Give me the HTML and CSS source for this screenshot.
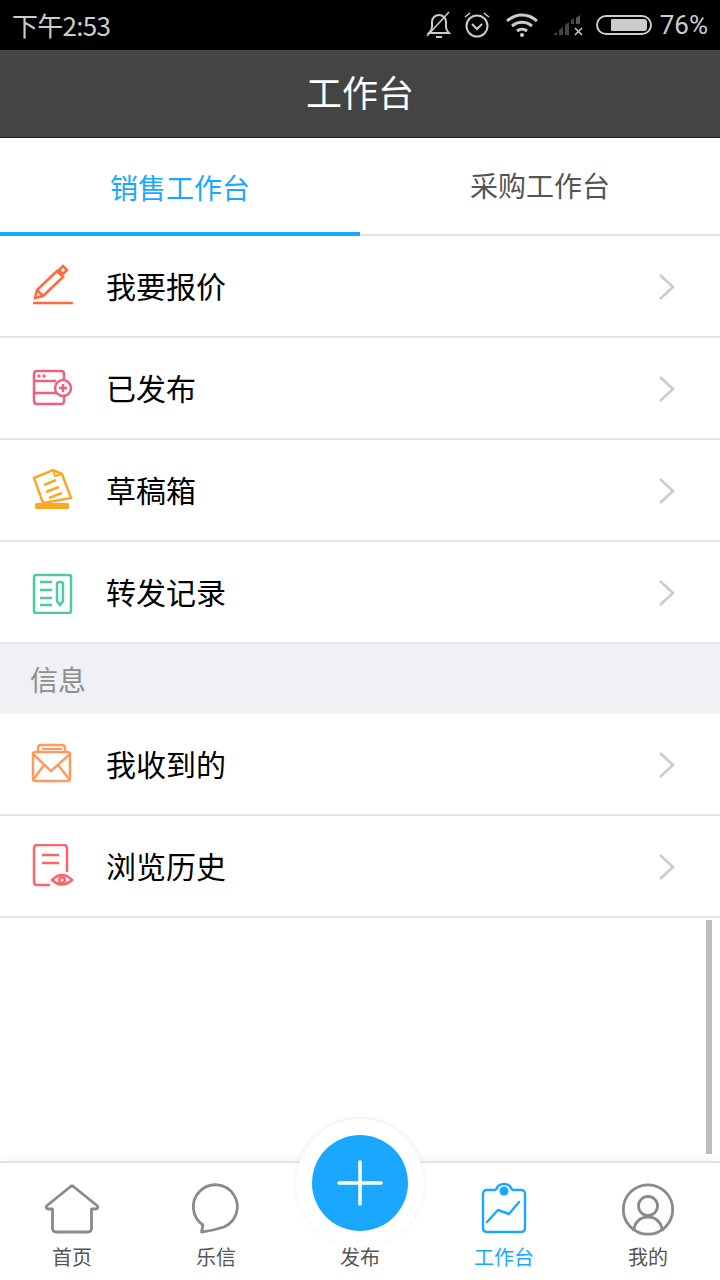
FILE: index.html
```html
<!DOCTYPE html>
<html lang="zh-CN">
<head>
	<meta charset="UTF-8">
	<title>工作台</title>
	<link rel="stylesheet" href="styles.css">
</head>
<body>
	<div class="app">
		<div class="status">
			<span class="time">下午2:53</span>
			<div class="status-right">
				<svg class="si bell" width="26" height="28" viewBox="0 0 26 28" fill="none" stroke="#ccc" stroke-width="2"><path d="M3 22c2-2 3-3 3-6v-5c0-4 3-7 7-7s7 3 7 7v5c0 3 1 4 3 6z"/><path d="M10 26h6"/><path d="M1 25L23 1" stroke-width="1.6"/></svg>
				<svg class="si clock" width="28" height="28" viewBox="0 0 28 28" fill="none" stroke="#ccc" stroke-width="2"><circle cx="14" cy="15" r="10.5"/><path d="M9 13l5 5 5-5"/><path d="M2 6l5-4M26 6l-5-4" stroke-width="1.6"/></svg>
				<svg class="si wifi" width="34" height="26" viewBox="0 0 34 26" fill="none" stroke="#ccc" stroke-width="3"><path d="M2 9c9-8 21-8 30 0"/><path d="M7 14c6-5 14-5 20 0"/><path d="M12 19c3-2.500 7-2.500 10 0"/><circle cx="17" cy="23" r="2" fill="#ccc" stroke="none"/></svg>
				<svg class="si signal" width="32" height="24" viewBox="0 0 32 24"><path d="M1 22l4-3v3zM7 22v-5l4-3v8zM13 22v-10l4-3v13z" fill="#444"/><path d="M24 11V5l4-3v9z" fill="#555"/><path d="M19 11V7l3-2v6z" fill="#444"/><path d="M23 15l7 7M30 15l-7 7" stroke="#ccc" stroke-width="1.500" fill="none"/></svg>
				<div class="battery"><div class="battery-level"></div></div>
				<span class="percent">76%</span>
			</div>
		</div>
		<div class="title">工作台</div>
		<div class="tabs">
			<div class="tab on">销售工作台</div>
			<div class="tab">采购工作台</div>
		</div>

		<div class="row">
			<svg class="ico" width="44" height="44" viewBox="0 0 44 44" fill="none" stroke="#ff6a3d" stroke-width="2.500"><path d="M5 34l2-8L27 7l6 6-20 19z"/><path d="M7 26l6 6"/><path d="M29 6l4-4 4 4-4 4z"/><path d="M3 39h40"/></svg>
			<span class="name">我要报价</span>
			<svg class="arrow" width="18" height="28" viewBox="0 0 18 28" fill="none" stroke="#ccc" stroke-width="2.600"><path d="M2 2l13 12L2 26"/></svg>
		</div>
		<div class="row">
			<svg class="ico" width="44" height="44" viewBox="0 0 44 44" fill="none" stroke="#f0607a" stroke-width="2.500"><path d="M34 13V8q0-3-3-3H7Q4 5 4 8v27q0 3 3 3h24q3 0 3-3v-5"/><path d="M4 15h22M4 27h22"/><circle cx="33" cy="22" r="8"/><path d="M29 22h8M33 18v8"/><circle cx="9" cy="10" r="1.700" fill="#f0607a" stroke="none"/><circle cx="14" cy="10" r="1.700" fill="#f0607a" stroke="none"/></svg>
			<span class="name">已发布</span>
			<svg class="arrow" width="18" height="28" viewBox="0 0 18 28" fill="none" stroke="#ccc" stroke-width="2.600"><path d="M2 2l13 12L2 26"/></svg>
		</div>
		<div class="row">
			<svg class="ico" width="44" height="44" viewBox="0 0 44 44" fill="none" stroke="#fba826" stroke-width="2.500"><path d="M4 10L23 2l9 4 9 24-28 5z"/><path d="M23 2l2 6 7-2" stroke-width="2"/><path d="M14 17l12-5M16 24l13-5M19 30l13-5"/><rect x="5" y="35" width="34" height="6" rx="1.500" fill="#fba826" stroke="none"/></svg>
			<span class="name">草稿箱</span>
			<svg class="arrow" width="18" height="28" viewBox="0 0 18 28" fill="none" stroke="#ccc" stroke-width="2.600"><path d="M2 2l13 12L2 26"/></svg>
		</div>
		<div class="row">
			<svg class="ico" width="44" height="44" viewBox="0 0 44 44" fill="none" stroke="#4ccba3" stroke-width="2.500"><rect x="4" y="5" width="37" height="38" rx="2"/><path d="M10 12h12M10 20h12M10 28h12M10 35h12"/><path d="M27 14q0-2 3-2t3 2v17l-3 4-3-4z"/></svg>
			<span class="name">转发记录</span>
			<svg class="arrow" width="18" height="28" viewBox="0 0 18 28" fill="none" stroke="#ccc" stroke-width="2.600"><path d="M2 2l13 12L2 26"/></svg>
		</div>

		<div class="section">信息</div>

		<div class="row">
			<svg class="ico" width="44" height="44" viewBox="0 0 44 44" fill="none" stroke="#ff9a5e" stroke-width="2.500"><rect x="3" y="10" width="37" height="29" rx="2.500"/><path d="M8 10V6q0-3 3-3h21q3 0 3 3v4"/><path d="M12 7h20" stroke-width="2"/><path d="M3 12l18 17 19-17M3 38l11-15M40 38L28 23"/></svg>
			<span class="name">我收到的</span>
			<svg class="arrow" width="18" height="28" viewBox="0 0 18 28" fill="none" stroke="#ccc" stroke-width="2.600"><path d="M2 2l13 12L2 26"/></svg>
		</div>
		<div class="row">
			<svg class="ico" width="44" height="44" viewBox="0 0 44 44" fill="none" stroke="#ff6468" stroke-width="2.500"><path d="M20 41H7q-3 0-3-3V4q0-3 3-3h27q3 0 3 3v24"/><path d="M12 11h17M12 19h17"/><path d="M22 36q10-10 20 0-10 9-20 0z" fill="#fff"/><circle cx="32" cy="36" r="2.800"/></svg>
			<span class="name">浏览历史</span>
			<svg class="arrow" width="18" height="28" viewBox="0 0 18 28" fill="none" stroke="#ccc" stroke-width="2.600"><path d="M2 2l13 12L2 26"/></svg>
		</div>

		<div class="blank"></div>

		<div class="bar">
			<div class="item">
				<svg width="56" height="52" viewBox="0 0 56 52" fill="none" stroke="#8a8a8a" stroke-width="2.800" stroke-linejoin="round"><path d="M28 5q-1 0-2 1L2.500 25q-1 3 2 3h4v19q0 4 4 4h31q4 0 4-4V28h4q3 0 2-3L30 6q-1-1-2-1z"/></svg>
				<span>首页</span>
			</div>
			<div class="item">
				<svg width="56" height="52" viewBox="0 0 56 52" fill="none" stroke="#8a8a8a" stroke-width="2.800" stroke-linejoin="round"><path d="M15 44l-1.500 7c8.500-1 16.500-3 22.500-5A22 22 0 1 0 15 44z"/></svg>
				<span>乐信</span>
			</div>
			<div class="item">
				<div class="gap-ico"></div>
				<span>发布</span>
			</div>
			<div class="item cur">
				<svg width="56" height="52" viewBox="0 0 56 52" fill="none" stroke="#1aa8ff" stroke-width="2.400" stroke-linejoin="round"><path d="M20 9h-9q-4 0-4 4v34q0 4 4 4h34q4 0 4-4V13q0-4-4-4h-9"/><path d="M20 9q2-6 8-6t8 6"/><circle cx="28" cy="10" r="4.500" fill="#1aa8ff" stroke="none"/><path d="M11 41l11-12 11 4 10-12" stroke-linecap="round"/></svg>
				<span>工作台</span>
			</div>
			<div class="item">
				<svg width="56" height="52" viewBox="0 0 56 52" fill="none" stroke="#8a8a8a" stroke-width="2.800"><circle cx="28" cy="28.500" r="24.700"/><circle cx="28" cy="25" r="9.500"/><path d="M13.500 50c1-9 7-14 14.500-14s13.500 5 14.500 14"/></svg>
				<span>我的</span>
			</div>
		</div>

		<div class="scroll-thumb"></div>
		<div class="fab">
			<div class="fab-inner">
				<svg width="48" height="48" viewBox="0 0 48 48" stroke="#fff" stroke-width="3.500" stroke-linecap="round"><path d="M24 3v42M3 24h42"/></svg>
			</div>
		</div>
	</div>
</body>
</html>
```

FILE: styles.css
```css
*{padding:0; margin:0; box-sizing:border-box;}
body{background:#fff; font-family:"Noto Sans CJK SC","Liberation Sans",sans-serif;}
.app{width:720px; height:1280px; position:relative; overflow:hidden; display:flex; flex-direction:column; background:#fff;}

.status{height:50px; background:#000; color:#ccc; display:flex; align-items:center; justify-content:space-between; padding:0 12px;}
.time{font-size:26px; letter-spacing:-0.7px; padding-bottom:2px;}
.status-right{display:flex; align-items:center;}
.si{display:block;}
.bell{margin-right:11px;}
.clock{margin-right:14px;}
.wifi{margin-right:13px;}
.signal{margin-right:12px;}
.battery{width:56px; height:20px; border:2px solid #ccc; border-radius:10px; padding:2px 3px 2px 13px; margin-right:8px;}
.battery-level{height:100%; background:#ccc; border-radius:1px 3px 3px 1px;}
.percent{font-family:Roboto,"Liberation Sans",sans-serif; font-size:26px; line-height:50px;}

.title{height:88px; background:#444; border-bottom:1px solid #1f1f1f; color:#fff; font-size:36px; display:flex; align-items:center; justify-content:center; padding-bottom:6px;}

.tabs{height:98px; display:flex; border-bottom:2px solid #e2e2e2;}
.tab{flex:1; font-size:28px; color:#555; display:flex; align-items:center; justify-content:center; padding-bottom:2px;}
.tab.on{color:#1aa8ff; border-bottom:4px solid #1aa8ff; margin-bottom:-2px; padding:4px 0 0;}

.row{height:102px; border-bottom:2px solid #e4e4e4; display:flex; align-items:center; padding:0 44px 0 30px;}
.ico{display:block; flex:none;}
.name{flex:1; margin-left:32px; font-size:30px; color:#000; padding-bottom:2px;}
.arrow{display:block; flex:none; margin-top:2px;}

.section{height:70px; background:#f0f1f5; color:#8d8d8d; font-size:28px; display:flex; align-items:center; padding-left:30px;}

.blank{flex:1;}

.bar{height:119px; border-top:2px solid #e2e2e2; display:flex; box-shadow:0 -3px 8px rgba(0,0,0,0.04);}
.item{flex:1; display:flex; flex-direction:column; align-items:center; padding-top:18px; color:#555; font-size:20px;}
.item svg{display:block; overflow:visible;}
.item span{margin-top:9px; line-height:30px;}
.item.cur{color:#1aa8ff;}
.gap-ico{height:52px;}

.scroll-thumb{position:absolute; left:706px; top:920px; width:6px; height:234px; background:#bdbdbd;}
.fab{position:absolute; left:296px; top:1119px; width:128px; height:128px; border-radius:50%; background:#fff; box-shadow:0 -1px 5px rgba(0,0,0,0.08); display:flex; align-items:center; justify-content:center;}
.fab-inner{width:96px; height:96px; border-radius:50%; background:#1aa8ff; display:flex; align-items:center; justify-content:center;}
```
